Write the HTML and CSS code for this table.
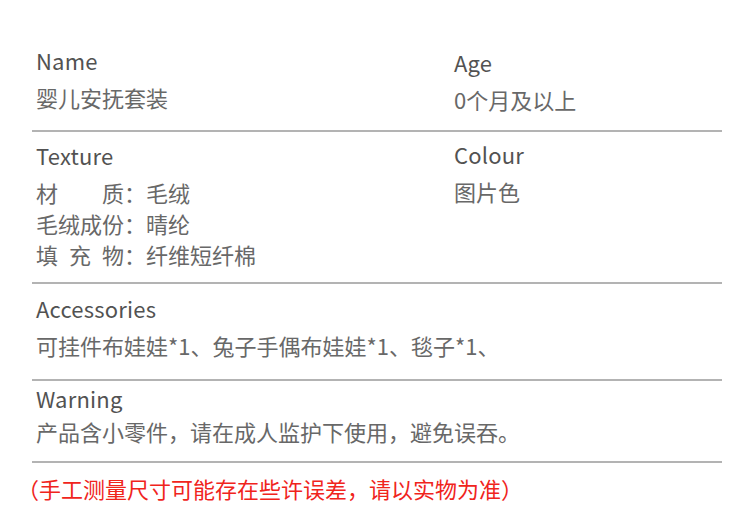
FILE: index.html
```html
<!DOCTYPE html>
<html lang="zh-CN">
<head>
<meta charset="utf-8">
<title>Product info</title>
<link rel="stylesheet" href="styles.css">
</head>
<body>
<div class="sheet">
  <section class="row row-1">
    <div class="cell">
      <div class="label">Name</div>
      <div class="values"><div>婴儿安抚套装</div></div>
    </div>
    <div class="cell cell-right">
      <div class="label">Age</div>
      <div class="values"><div>0个月及以上</div></div>
    </div>
  </section>
  <section class="row row-2">
    <div class="cell">
      <div class="label">Texture</div>
      <div class="values">
        <div>材　　质：毛绒</div>
        <div>毛绒成份：晴纶</div>
        <div>填&ensp;充&ensp;物：纤维短纤棉</div>
      </div>
    </div>
    <div class="cell cell-right-up">
      <div class="label">Colour</div>
      <div class="values"><div>图片色</div></div>
    </div>
  </section>
  <section class="row row-3 single">
    <div class="cell">
      <div class="label">Accessories</div>
      <div class="values"><div>可挂件布娃娃*1、兔子手偶布娃娃*1、毯子*1、</div></div>
    </div>
  </section>
  <section class="row row-4 single">
    <div class="cell">
      <div class="label">Warning</div>
      <div class="values tight"><div>产品含小零件，请在成人监护下使用，避免误吞。</div></div>
    </div>
  </section>
</div>
<p class="note">（手工测量尺寸可能存在些许误差，请以实物为准）</p>
</body>
</html>
```

FILE: styles.css
```css
html, body {
  margin: 0;
  padding: 0;
  background: #ffffff;
}

body {
  font-family: "Noto Sans CJK SC", "Noto Sans", sans-serif;
  font-size: 22px;
  line-height: 31px;
  width: 750px;
  height: 526px;
  overflow: hidden;
}

.sheet {
  margin-left: 32px;
  width: 690px;
}

.row {
  display: grid;
  grid-template-columns: 418px 1fr;
  padding: 0 4px;
  border-bottom: 2px solid #b3b3b3;
}

.row.single {
  grid-template-columns: 1fr;
}

.row-1 { padding-top: 45px; padding-bottom: 15px; }
.row-2 { padding-top: 8px;  padding-bottom: 12px; }
.row-3 { padding-top: 9px;  padding-bottom: 18px; }
.row-4 { padding-top: 2px;  padding-bottom: 14px; }

.cell-right { padding-top: 2px; }
.cell-right-up { margin-top: -1px; }

.label {
  color: #525252;
  letter-spacing: 0.2px;
}

.values {
  margin-top: 6px;
  color: #686868;
}

.values.tight {
  margin-top: 2px;
}

.note {
  margin: 10px 0 0 17px;
  color: #f0241c;
  white-space: nowrap;
}
```
